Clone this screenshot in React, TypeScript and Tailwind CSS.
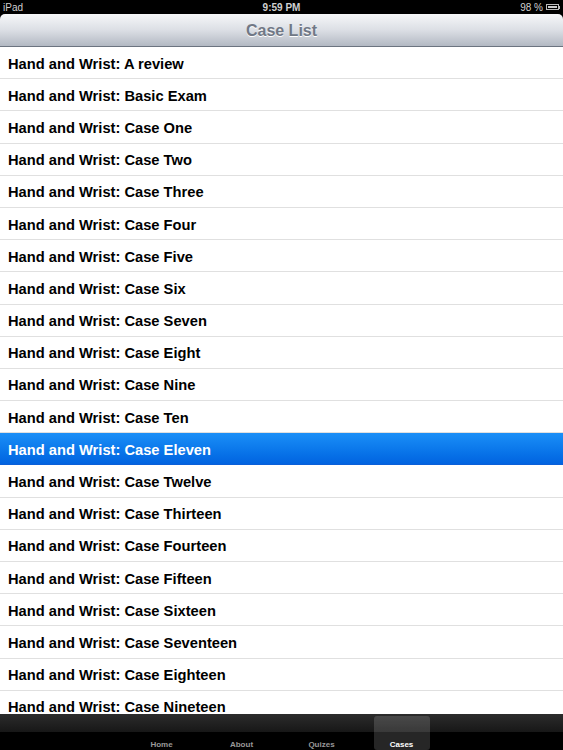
const cases = [
  "A review",
  "Basic Exam",
  "Case One",
  "Case Two",
  "Case Three",
  "Case Four",
  "Case Five",
  "Case Six",
  "Case Seven",
  "Case Eight",
  "Case Nine",
  "Case Ten",
  "Case Eleven",
  "Case Twelve",
  "Case Thirteen",
  "Case Fourteen",
  "Case Fifteen",
  "Case Sixteen",
  "Case Seventeen",
  "Case Eighteen",
  "Case Nineteen",
];

const tabs = ["Home", "About", "Quizes", "Cases"];

export default function App() {
  return (
    <div
      className="flex h-[750px] w-[563px] flex-col overflow-hidden bg-black"
      style={{ fontFamily: '"Liberation Sans", Arial, sans-serif' }}
    >
      {/* status bar */}
      <div className="relative flex h-[14px] shrink-0 items-center justify-between px-[3px] text-[10px] text-[#d0d0d0]">
        <span>iPad</span>
        <span className="absolute left-1/2 -translate-x-1/2 font-bold">9:59 PM</span>
        <div className="flex items-center gap-[3px]">
          <span>98 %</span>
          <div className="flex items-center">
            <div className="h-[6px] w-[13px] border border-[#bbb] p-[1px]">
              <div className="h-full w-full bg-[#ccc]" />
            </div>
            <div className="h-[3px] w-[1px] bg-[#bbb]" />
          </div>
        </div>
      </div>

      {/* nav bar */}
      <div className="flex h-[33px] shrink-0 items-center justify-center rounded-t-[5px] border-b border-[#6c7480] bg-gradient-to-b from-[#f6f7f9] via-[#dcdfe5] to-[#b3b9c3] pt-[1px]">
        <span className="text-[16px] font-bold text-[#717886] [text-shadow:0_1px_0_#fff]">Case List</span>
      </div>

      {/* list */}
      <div className="flex-1 overflow-hidden bg-white">
        {cases.map((c) => {
          const selected = c === "Case Eleven";
          return (
            <div
              key={c}
              className={
                selected
                  ? "flex h-[32.2px] items-center border-b border-[#0b5fd8] bg-gradient-to-b from-[#1b8ff7] to-[#0263e0] px-[8px] pt-[2px] text-[14.7px] font-bold text-white"
                  : "flex h-[32.2px] items-center border-b border-[#e0e0e0] px-[8px] pt-[2px] text-[14.7px] font-bold text-black"
              }
            >
              Hand and Wrist: {c}
            </div>
          );
        })}
      </div>

      {/* tab bar */}
      <div className="flex h-[36px] shrink-0 justify-center gap-[4px] bg-[linear-gradient(to_bottom,#2c2c2c_0%,#171717_50%,#000_51%,#000_100%)] pt-[2px]">
        {tabs.map((t) => {
          const active = t === "Cases";
          return (
            <div
              key={t}
              className={
                active
                  ? "mx-[10px] flex w-[56px] items-end justify-center rounded-[3px] bg-white/15 text-[8px] leading-[10px] font-bold text-white"
                  : "flex w-[76px] items-end justify-center text-[8px] leading-[10px] font-bold text-[#999]"
              }
            >
              {t}
            </div>
          );
        })}
      </div>
    </div>
  );
}
